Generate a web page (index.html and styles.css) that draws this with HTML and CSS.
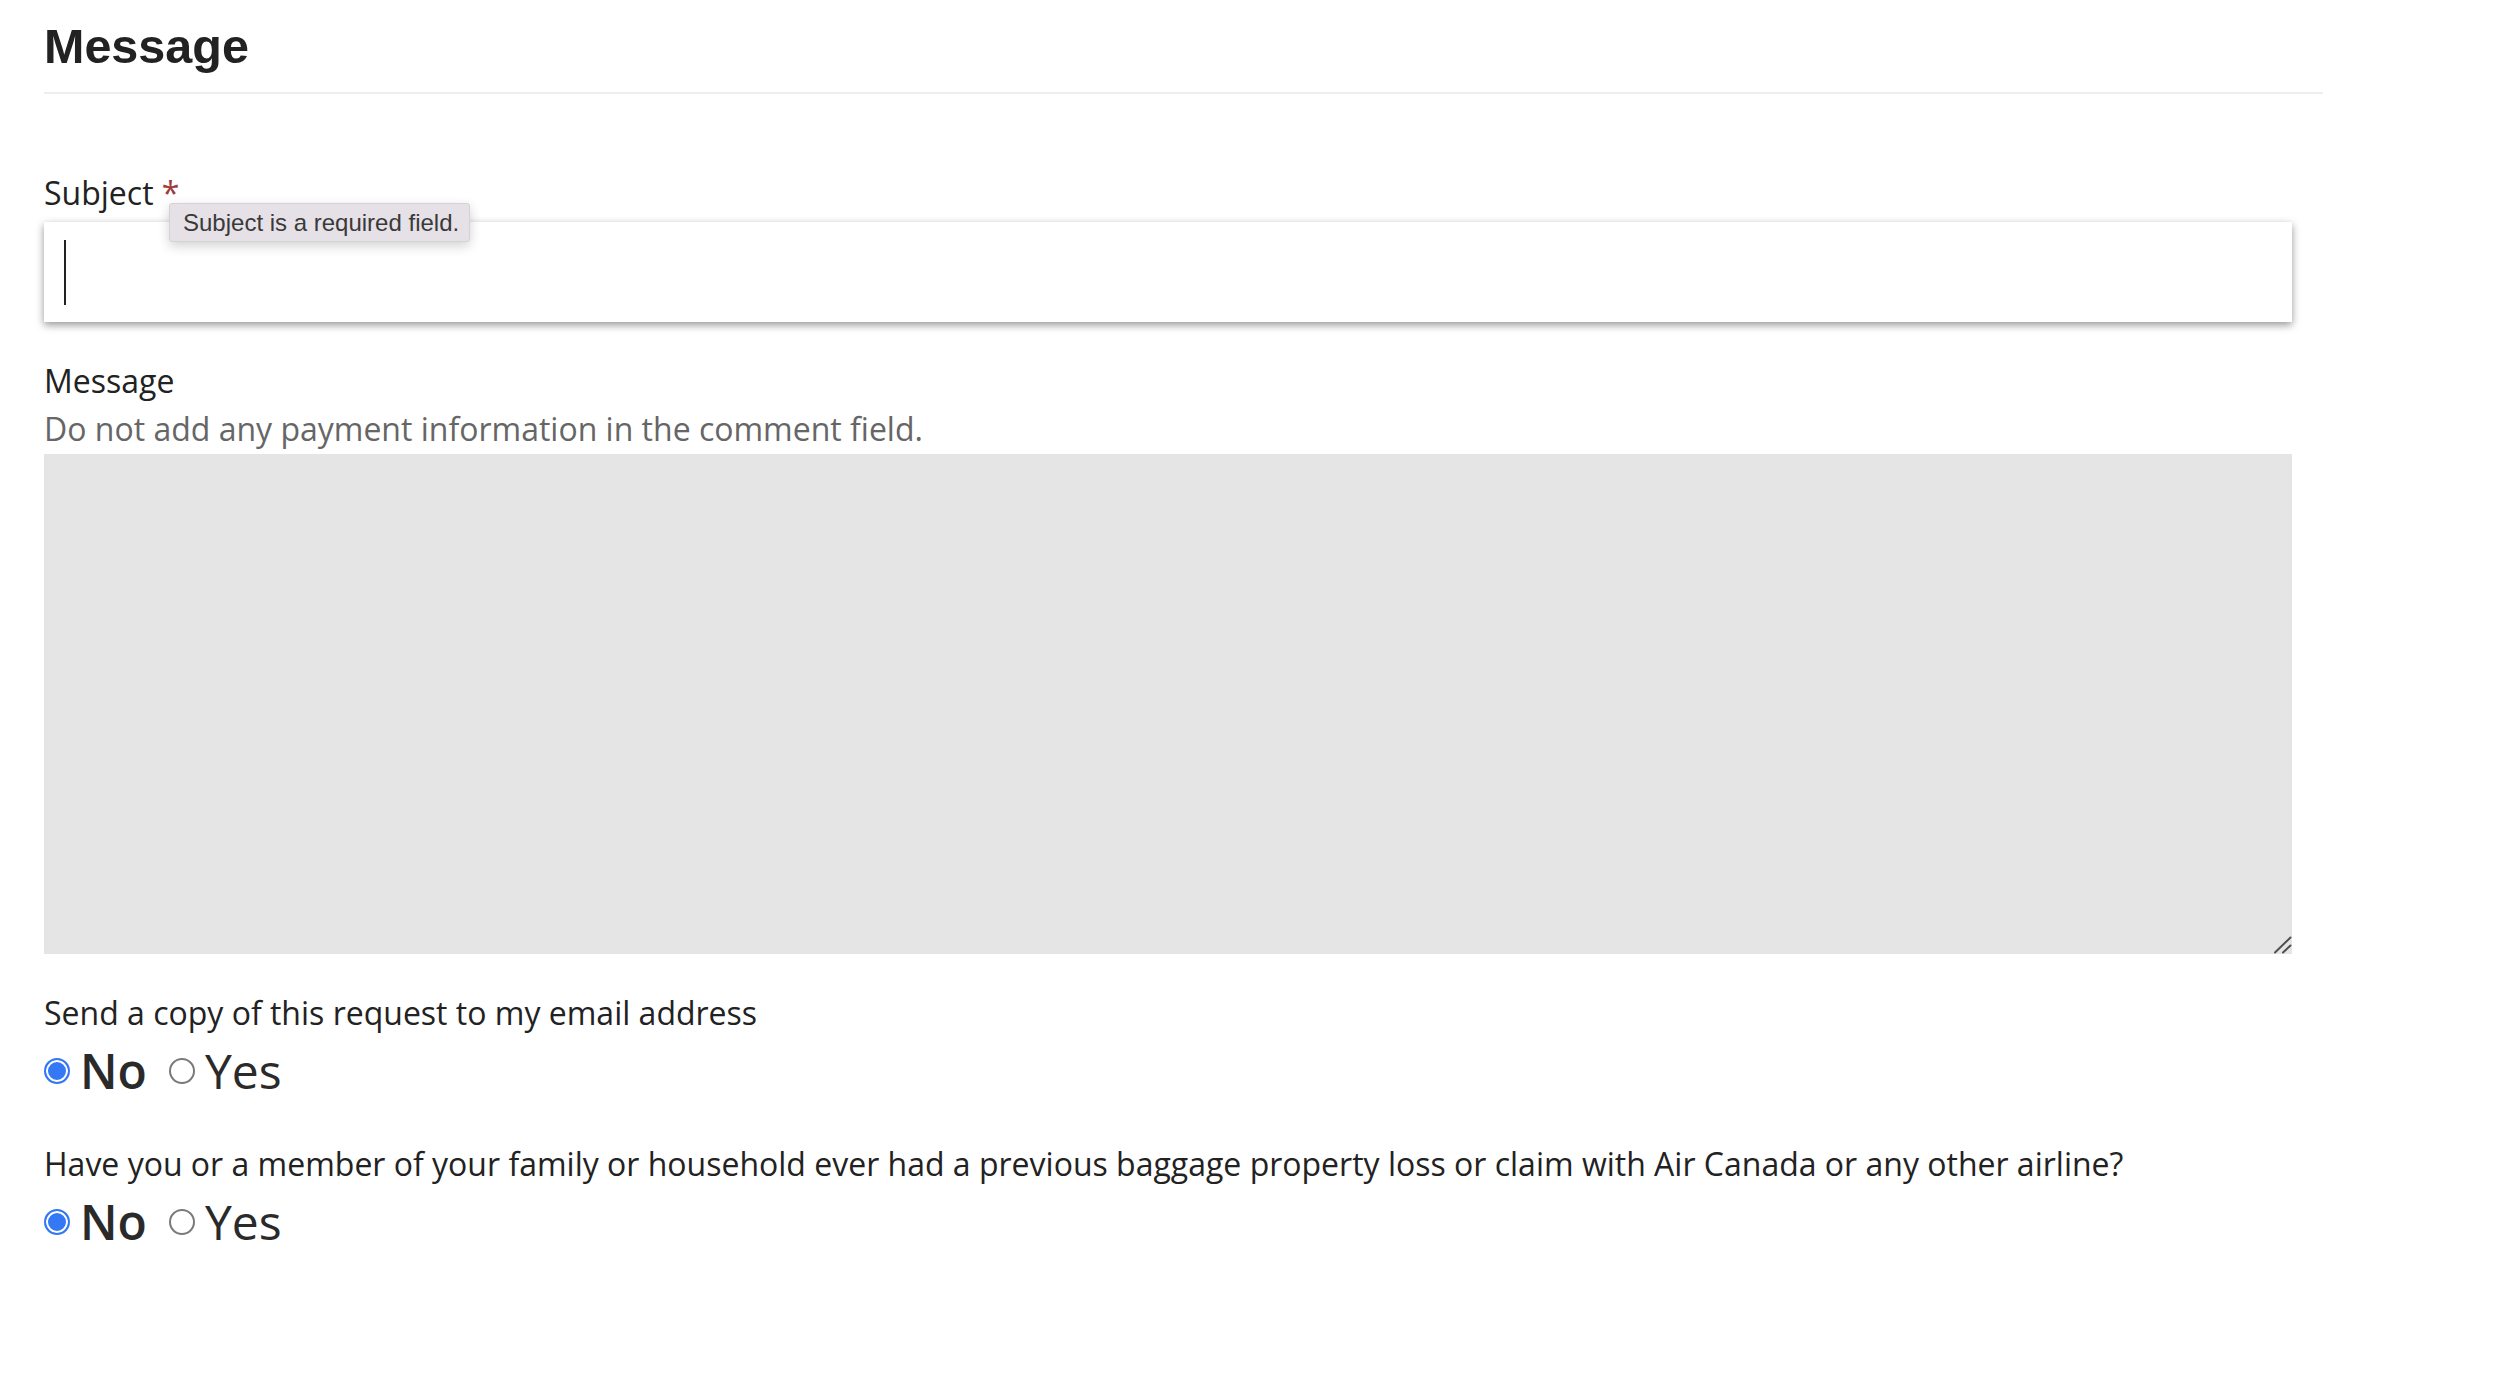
FILE: index.html
```html
<!DOCTYPE html>
<html lang="en">
<head>
<meta charset="utf-8">
<title>Message</title>
<link rel="stylesheet" href="styles.css">
</head>
<body>
<main class="page">
  <h1 class="title">Message</h1>
  <hr class="rule">
  <form class="form">
    <div class="field field-subject">
      <label class="label" for="subject">Subject <span class="req">*</span></label>
      <div class="input" id="subject"><span class="caret"></span></div>
      <div class="tooltip">Subject is a required field.</div>
    </div>
    <div class="field field-message">
      <label class="label" for="message">Message</label>
      <p class="help">Do not add any payment information in the comment field.</p>
      <div class="textarea-wrap">
        <textarea class="textarea" id="message"></textarea>
        <svg class="grip" width="18" height="18" viewBox="0 0 18 18" aria-hidden="true">
          <path d="M1 16.5 L16.5 1.5 M9 16.5 L16.5 9.5" stroke="#4f4f4f" stroke-width="2" stroke-linecap="round" fill="none"/>
        </svg>
      </div>
    </div>
    <div class="question q-first">
      <div class="label">Send a copy of this request to my email address</div>
      <div class="options">
        <label class="opt"><input class="radio" type="radio" name="copy" checked><span class="opt-text opt-on">No</span></label>
        <label class="opt"><input class="radio" type="radio" name="copy"><span class="opt-text">Yes</span></label>
      </div>
    </div>
    <div class="question q-second">
      <div class="label">Have you or a member of your family or household ever had a previous baggage property loss or claim with Air Canada or any other airline?</div>
      <div class="options">
        <label class="opt"><input class="radio" type="radio" name="prev" checked><span class="opt-text opt-on">No</span></label>
        <label class="opt"><input class="radio" type="radio" name="prev"><span class="opt-text">Yes</span></label>
      </div>
    </div>
  </form>
</main>
</body>
</html>
```
FILE: styles.css
```css
html, body {
  margin: 0;
  background: #ffffff;
}
body {
  color: #222222;
  font-family: "Open Sans", "Noto Sans", sans-serif;
}
.page {
  width: 2279px;
  padding: 19px 0 40px 44px;
}
.title {
  margin: 0;
  font: bold 48.5px/55px "Liberation Sans", Arial, sans-serif;
  color: #222222;
}
.rule {
  margin: 18px 0 0;
  border: 0;
  height: 2px;
  background: #eeeeee;
}
.form {
  width: 2248px;
}
.field-subject {
  position: relative;
  margin-top: 78px;
}
.label {
  display: block;
  font-size: 32px;
  line-height: 42px;
  color: #222222;
}
.req {
  color: #a0393a;
}
.input {
  margin-top: 8px;
  height: 100px;
  box-sizing: border-box;
  padding: 18px 0 0 20px;
  background: #ffffff;
  box-shadow: 0 3px 8px rgba(0, 0, 0, 0.42);
}
.caret {
  display: block;
  width: 2px;
  height: 65px;
  background: #222222;
}
.tooltip {
  position: absolute;
  left: 125px;
  top: 31px;
  box-sizing: border-box;
  height: 39px;
  width: 301px;
  padding: 0 13px;
  border: 1px solid #d6d1d7;
  border-radius: 3px;
  background: #e6e1e7;
  box-shadow: 0 4px 12px rgba(0, 0, 0, 0.18);
  font: 24px/37px "Liberation Sans", Arial, sans-serif;
  color: #3a3a3a;
  white-space: nowrap;
}
.field-message {
  margin-top: 38px;
}
.help {
  margin: 3px 0 0;
  font-size: 32px;
  line-height: 48px;
  color: #666666;
}
.textarea-wrap {
  position: relative;
  margin-top: 1px;
}
.textarea {
  display: block;
  width: 100%;
  height: 500px;
  box-sizing: border-box;
  border: 0;
  padding: 10px;
  background: #e5e5e5;
  resize: none;
  font: inherit;
  outline: none;
}
.grip {
  position: absolute;
  right: 0;
  bottom: 0;
  display: block;
}
.q-first {
  margin-top: 38px;
}
.q-second {
  margin-top: 40px;
}
.options {
  display: flex;
  align-items: center;
  margin-top: 4px;
  height: 65px;
}
.opt {
  display: flex;
  align-items: center;
  font-size: 48px;
  line-height: 65px;
  color: #2a2a2a;
}
.opt + .opt {
  margin-left: 22px;
}
.radio {
  appearance: none;
  -webkit-appearance: none;
  flex: none;
  width: 26px;
  height: 26px;
  margin: 0;
  box-sizing: border-box;
  border-radius: 50%;
  border: 2px solid #7a7a7a;
  background: #ffffff;
}
.radio:checked {
  border-color: #3478f6;
  background: #3478f6;
  box-shadow: inset 0 0 0 2px #ffffff;
}
.opt-text {
  margin-left: 10px;
}
.opt-on {
  font-weight: 600;
}
```
